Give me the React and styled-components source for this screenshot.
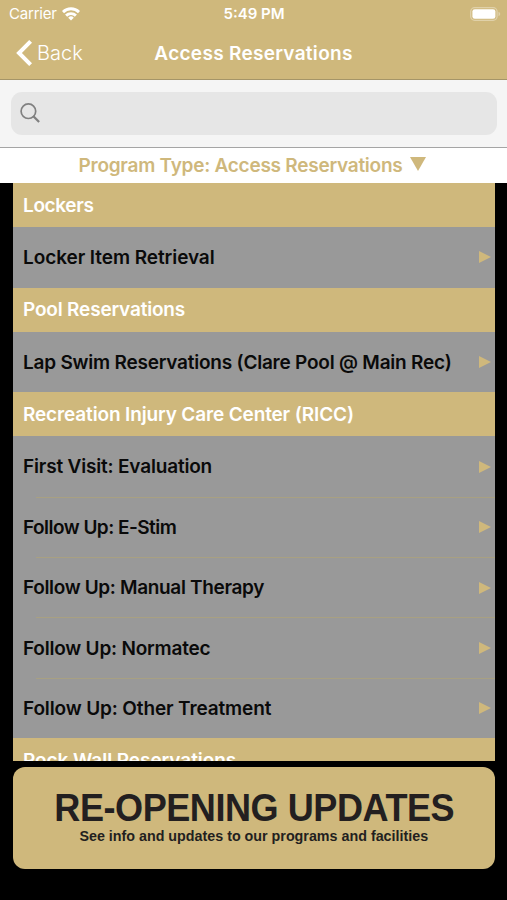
import React from 'react';
import styled, { createGlobalStyle } from 'styled-components';

const sections = [
  { title: 'Lockers', spacing: '-0.35px', items: [{ name: 'Locker Item Retrieval', spacing: '-0.07px' }] },
  {
    title: 'Pool Reservations',
    spacing: '-0.18px',
    items: [{ name: 'Lap Swim Reservations (Clare Pool @ Main Rec)', spacing: '-0.22px' }],
  },
  {
    title: 'Recreation Injury Care Center (RICC)',
    spacing: '-0.14px',
    items: [
      { name: 'First Visit: Evaluation', spacing: '-0.18px' },
      { name: 'Follow Up: E-Stim', spacing: '-0.53px' },
      { name: 'Follow Up: Manual Therapy', spacing: '-0.34px' },
      { name: 'Follow Up: Normatec', spacing: '-0.21px' },
      { name: 'Follow Up: Other Treatment', spacing: '-0.13px' },
    ],
  },
  { title: 'Rock Wall Reservations', spacing: '-0.06px', items: [] },
];

const App = () => {
  return (
    <Screen>
      <GlobalStyle />
      <StatusBar>
        <Carrier>
          <span>Carrier</span>
          <svg width="18" height="14" viewBox="0 0 18 14" fill="none" stroke="#fff" strokeWidth="2.9">
            <path d="M1 5.1a11.4 11.4 0 0 1 16 0" />
            <path d="M4.1 8.6a7 7 0 0 1 9.8 0" />
            <path d="M9 13.6 6.2 10.7a4 4 0 0 1 5.6 0z" fill="#fff" stroke="none" />
          </svg>
        </Carrier>
        <Clock>5:49 PM</Clock>
        <Battery>
          <svg width="31" height="14" viewBox="0 0 31 14">
            <rect x="0.7" y="0.7" width="26.4" height="12.6" rx="4" fill="none" stroke="#fff" strokeOpacity="0.35" strokeWidth="1.3" />
            <rect x="2.4" y="2.2" width="23" height="9.6" rx="2.4" fill="#fff" />
            <path d="M28.5 4.8v4.4q1.8-.7 1.8-2.2t-1.8-2.2z" fill="#fff" fillOpacity="0.35" />
          </svg>
        </Battery>
      </StatusBar>

      <NavBar>
        <BackButton>
          <svg width="17" height="26" viewBox="0 0 17 26" fill="none" stroke="#fff" strokeWidth="4">
            <path d="M14.6 1.4 3 13l11.6 11.6" />
          </svg>
          <span>Back</span>
        </BackButton>
        <NavTitle>Access Reservations</NavTitle>
      </NavBar>

      <SearchBar>
        <SearchField>
          <svg width="20" height="20" viewBox="0 0 20 20" fill="none" stroke="#808080">
            <circle cx="8.4" cy="8.2" r="7.3" strokeWidth="1.7" />
            <path d="m13.4 13.3 5.7 5.7" strokeWidth="2.3" />
          </svg>
        </SearchField>
      </SearchBar>

      <ProgramType>
        <span>Program Type: Access Reservations</span>
        <svg width="16" height="14" viewBox="0 0 16 14" fill="#cfb87c">
          <path d="M0 0h16L8 14z" />
        </svg>
      </ProgramType>

      <List>
        {sections.map((section) => (
          <React.Fragment key={section.title}>
            <SectionHeader $spacing={section.spacing}>{section.title}</SectionHeader>
            {section.items.map((item, index) => (
              <React.Fragment key={item.name}>
                {index > 0 && <Divider />}
                <Row $divided={index > 0} $spacing={item.spacing}>
                  <span>{item.name}</span>
                  <svg width="12" height="12" viewBox="0 0 12 12" fill="#cfb87c">
                    <path d="M0 0v12l12-6z" />
                  </svg>
                </Row>
              </React.Fragment>
            ))}
          </React.Fragment>
        ))}
      </List>

      <Banner>
        <h2>RE-OPENING UPDATES</h2>
        <p>See info and updates to our programs and facilities</p>
      </Banner>
    </Screen>
  );
};

const GlobalStyle = createGlobalStyle`
  * {
    box-sizing: border-box;
  }
  body {
    margin: 0;
    background: #000;
  }
  svg {
    display: block;
    flex: none;
  }
`;

const Screen = styled.main`
  width: 507px;
  height: 900px;
  overflow: hidden;
  display: flex;
  flex-direction: column;
  background: #000;
  font-family: Inter, 'Liberation Sans', sans-serif;
  font-size: 19px;
  font-weight: 600;
  white-space: nowrap;
`;

const StatusBar = styled.div`
  flex: none;
  height: 27px;
  padding: 0 6px 0 9px;
  display: grid;
  grid-template-columns: 1fr auto 1fr;
  align-items: center;
  background: #cfb87c;
  color: #fff;
  font-size: 15px;
`;

const Carrier = styled.div`
  display: flex;
  align-items: center;
  gap: 5px;
  font-weight: 400;
  letter-spacing: -0.2px;
`;

const Clock = styled.div`
  padding-right: 2px;
`;

const Battery = styled.div`
  display: flex;
  justify-content: flex-end;
`;

const NavBar = styled.nav`
  flex: none;
  height: 53px;
  padding: 0 16px;
  display: grid;
  grid-template-columns: 1fr auto 1fr;
  align-items: center;
  background: #cfb87c;
  border-bottom: 1px solid #a59568;
  color: #fff;
`;

const BackButton = styled.div`
  display: flex;
  align-items: center;
  gap: 4px;
  font-size: 20px;
  font-weight: 300;
`;

const NavTitle = styled.h1`
  margin: 0;
  font-size: 19px;
  font-weight: 600;
  letter-spacing: 0.3px;
`;

const SearchBar = styled.div`
  flex: none;
  height: 68px;
  padding: 12px 10px 12px 11px;
  background: #f5f5f5;
  border-bottom: 1px solid #a5a5a5;
`;

const SearchField = styled.div`
  height: 43px;
  padding: 0 0 2px 9px;
  display: flex;
  align-items: center;
  border-radius: 11px;
  background: #e6e6e6;
`;

const ProgramType = styled.div`
  flex: none;
  height: 35px;
  padding-right: 2px;
  display: flex;
  align-items: center;
  justify-content: center;
  gap: 8px;
  background: #fff;
  color: #cfb87c;
  letter-spacing: -0.25px;

  svg {
    margin-bottom: 3px;
  }
`;

const List = styled.div`
  flex: none;
  height: 577.5px;
  margin: 0 12.5px 0 13px;
  overflow: hidden;
  background: #999;
`;

const SectionHeader = styled.div`
  height: 44.3px;
  padding-left: 10px;
  display: flex;
  align-items: center;
  background: #cfb87c;
  color: #fff;
  letter-spacing: ${(props) => props.$spacing};
`;

const Divider = styled.div`
  height: 1px;
  margin-left: 23px;
  background: #a8a082;
`;

const Row = styled.div`
  height: ${(props) => (props.$divided ? '59.3px' : '60.3px')};
  padding: 0 4px 0 10px;
  display: flex;
  align-items: center;
  justify-content: space-between;
  color: #0a0a0a;
  letter-spacing: ${(props) => props.$spacing};
`;

const Banner = styled.section`
  flex: none;
  height: 102px;
  margin: 6.5px 12.5px 0 13px;
  padding-top: 22px;
  border-radius: 12px;
  background: #cfb87c;
  color: #231f20;
  font-family: 'Liberation Sans', Arial, sans-serif;
  text-align: center;

  h2 {
    margin: 0;
    font-size: 39px;
    font-weight: 700;
    line-height: 38px;
    letter-spacing: -0.5px;
    transform: translateX(0.5px) scaleX(0.925);
  }

  p {
    margin: 0;
    font-size: 15px;
    font-weight: 700;
    line-height: 17px;
    transform: scaleX(0.953);
  }
`;

export default App;
